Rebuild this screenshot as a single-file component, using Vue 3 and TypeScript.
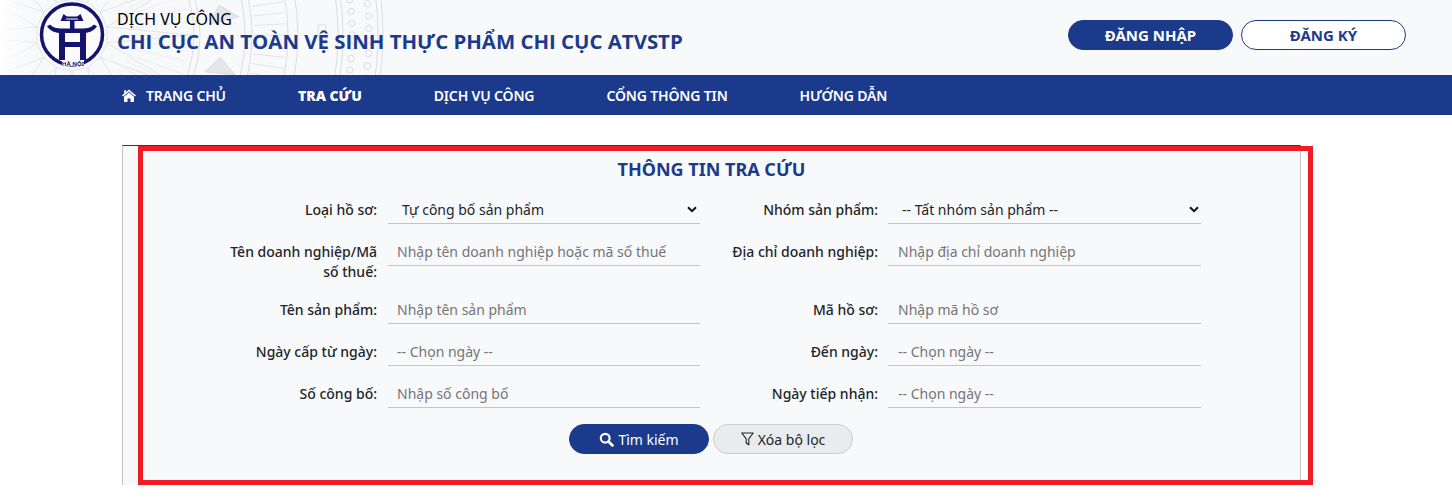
<script setup lang="ts">
const CX = 72
const CY = 35
function polar(r: number, a: number) {
  return { x: CX + Math.cos(a) * r, y: CY + Math.sin(a) * r }
}
function seg(r1: number, r2: number, a: number) {
  const p = polar(r1, a)
  const q = polar(r2, a)
  return { x1: p.x, y1: p.y, x2: q.x, y2: q.y }
}
const star = Array.from({ length: 14 }, (_, i) => {
  const a = (i * Math.PI * 2) / 14
  const w = Math.PI / 14
  const l = polar(36, a - w)
  const t = polar(118, a)
  const r = polar(36, a + w)
  return `${l.x},${l.y} ${t.x},${t.y} ${r.x},${r.y}`
})
const hatch = Array.from({ length: 56 }, (_, i) => seg(60, 118, (i * Math.PI * 2) / 56))
const bandTicks = Array.from({ length: 120 }, (_, i) => seg(182, 214, (i * Math.PI * 2) / 120))
const figures = Array.from({ length: 22 }, (_, i) => {
  const a = (i * Math.PI * 2) / 22
  const p = polar(250, a)
  return { x: p.x - 4, y: p.y - 10, h: i % 2 ? 20 : 14 }
})
const birds = Array.from({ length: 18 }, (_, i) => {
  const a = (i * Math.PI * 2) / 18 + 0.15
  const p = polar(150, a)
  const q = polar(168, a + 0.09)
  const s = polar(138, a + 0.12)
  return `${p.x},${p.y} ${q.x},${q.y} ${s.x},${s.y}`
})
const beads = Array.from({ length: 18 }, (_, i) => {
  const a = (i - 9) * 0.042
  return [polar(280, a), polar(297, a + 0.02)]
}).flat()
const rings = [122, 128, 173, 180, 216, 226, 266, 271, 306, 311]

const nav = ['TRA CỨU', 'DỊCH VỤ CÔNG', 'CỔNG THÔNG TIN', 'HƯỚNG DẪN']
const fields = [
  { label: 'Loại hồ sơ:', kind: 'select', value: 'Tự công bố sản phẩm' },
  { label: 'Nhóm sản phẩm:', kind: 'select', value: '-- Tất nhóm sản phẩm --' },
  { label: 'Tên doanh nghiệp/Mã số thuế:', kind: 'input', value: 'Nhập tên doanh nghiệp hoặc mã số thuế' },
  { label: 'Địa chỉ doanh nghiệp:', kind: 'input', value: 'Nhập địa chỉ doanh nghiệp' },
  { label: 'Tên sản phẩm:', kind: 'input', value: 'Nhập tên sản phẩm' },
  { label: 'Mã hồ sơ:', kind: 'input', value: 'Nhập mã hồ sơ' },
  { label: 'Ngày cấp từ ngày:', kind: 'input', value: '-- Chọn ngày --' },
  { label: 'Đến ngày:', kind: 'input', value: '-- Chọn ngày --' },
  { label: 'Số công bố:', kind: 'input', value: 'Nhập số công bố' },
  { label: 'Ngày tiếp nhận:', kind: 'input', value: '-- Chọn ngày --' },
]
</script>

<template>
  <div class="page">
    <header class="top">
      <svg class="pattern" width="400" height="75" viewBox="0 0 400 75" aria-hidden="true">
        <defs>
          <linearGradient id="fade" x1="0" x2="1" y1="0" y2="0">
            <stop offset="0" stop-color="#ffffff" stop-opacity="1" />
            <stop offset="1" stop-color="#f8f9fb" stop-opacity="0" />
          </linearGradient>
        </defs>
        <g fill="none" stroke="#e2e4e8" stroke-width="1">
          <line v-for="(r, i) in hatch" :key="'h' + i" v-bind="r" stroke="#eceef1" />
          <polygon v-for="(p, i) in star" :key="'s' + i" :points="p" />
          <circle v-for="r in rings" :key="r" :cx="CX" :cy="CY" :r="r" stroke="#dcdee2" />
          <line v-for="(r, i) in bandTicks" :key="'t' + i" v-bind="r" />
          <polygon v-for="(p, i) in birds" :key="'b' + i" :points="p" fill="#e4e6ea" stroke="#dadce0" />
          <rect v-for="(f, i) in figures" :key="'f' + i" :x="f.x" :y="f.y" width="8" :height="f.h" stroke="#dcdee2" />
          <circle v-for="(b, i) in beads" :key="'d' + i" :cx="b.x" :cy="b.y" r="3.200" stroke="#dcdee2" />
        </g>
        <rect x="0" y="0" width="40" height="75" fill="url(#fade)" />
      </svg>
      <svg class="logo" width="85" height="75" viewBox="0 0 85 75" aria-label="Logo Hà Nội">
        <circle cx="42" cy="34.500" r="30.500" fill="#fbfbfd" stroke="#14146e" stroke-width="3.500" />
        <g fill="#14146e">
          <path d="M30.500 21 L33.500 14 L37 16.500 L47 16.500 L50.500 14 L53.500 21 Z M35.500 19.500 H48.500 L47.500 18.500 H36.500 Z" fill-rule="evenodd" />
          <rect x="40" y="21" width="4.500" height="8" />
          <path d="M17 26.500 L20 24.500 C23 27.500 27 28.500 31 28.500 H53 C57 28.500 61 27.500 64 24.500 L67 26.500 C63 31.500 58 33 53 33 H31 C26 33 21 31.500 17 26.500 Z" />
          <rect x="29" y="32" width="6" height="28" />
          <rect x="50" y="32" width="6" height="28" />
          <rect x="34" y="42" width="17" height="5" />
        </g>
        <rect x="32" y="60" width="22" height="6" fill="#fbfbfd" />
        <text x="43" y="65.500" class="logo-text" text-anchor="middle">HÀ NỘI</text>
      </svg>
      <div class="brand">
        <div class="brand-sub">DỊCH VỤ CÔNG</div>
        <div class="brand-name">CHI CỤC AN TOÀN VỆ SINH THỰC PHẨM CHI CỤC ATVSTP</div>
      </div>
      <div class="auth">
        <a class="pill pill-solid">ĐĂNG NHẬP</a>
        <a class="pill pill-line">ĐĂNG KÝ</a>
      </div>
    </header>

    <nav class="nav">
      <a class="nav-item">
        <svg class="home" width="14" height="13" viewBox="0 0 14 13" aria-hidden="true">
          <path d="M7 0.500 L14 6.500 L12.800 7.500 L7 2.500 L1.200 7.500 L0 6.500 L2.200 4.600 V1.200 H4 V3.100 Z" fill="#fff" />
          <path d="M7 3.500 L12 7.800 V13 H8.500 V9.500 H5.500 V13 H2 V7.800 Z" fill="#fff" />
        </svg>
        TRANG CHỦ
      </a>
      <a v-for="(n, i) in nav" :key="n" class="nav-item" :class="{ active: i === 0 }">{{ n }}</a>
    </nav>

    <section class="card">
      <h2 class="title">THÔNG TIN TRA CỨU</h2>
      <div class="form">
        <div v-for="f in fields" :key="f.label" class="field">
          <label class="label">{{ f.label }}</label>
          <div v-if="f.kind === 'select'" class="control select">
            <span>{{ f.value }}</span>
            <svg width="10" height="7" viewBox="0 0 10 7" aria-hidden="true">
              <path d="M1 1.200 L5 5.200 L9 1.200" fill="none" stroke="#111" stroke-width="2" />
            </svg>
          </div>
          <div v-else class="control placeholder">{{ f.value }}</div>
        </div>
      </div>
      <div class="actions">
        <button class="btn btn-search" type="button">
          <svg width="15" height="15" viewBox="0 0 15 15" aria-hidden="true">
            <circle cx="6.200" cy="6.200" r="4.400" fill="none" stroke="#fff" stroke-width="2.200" />
            <path d="M9.500 9.500 L13.500 13.500" stroke="#fff" stroke-width="2.600" stroke-linecap="round" />
          </svg>
          Tìm kiếm
        </button>
        <button class="btn btn-clear" type="button">
          <svg width="13" height="14" viewBox="0 0 13 14" aria-hidden="true">
            <path d="M0.800 1 H12.200 L7.800 6.800 V12.800 L5.200 11 V6.800 Z" fill="none" stroke="#222" stroke-width="1.100" stroke-linejoin="round" />
          </svg>
          Xóa bộ lọc
        </button>
      </div>
    </section>

    <div class="highlight"></div>
  </div>
</template>

<style>
html, body { margin: 0; background: #fff; }
</style>

<style scoped>
.page {
  position: relative;
  width: 1452px;
  height: 499px;
  overflow: hidden;
  font-family: "Noto Sans", "Open Sans", sans-serif;
  color: #212529;
  background: #fff;
}
.top {
  position: relative;
  height: 75px;
  box-sizing: border-box;
  padding: 0 46px 0 30px;
  background: #f8f9fb;
  display: flex;
  align-items: center;
  overflow: hidden;
}
.pattern { position: absolute; left: 0; top: 0; }
.logo { position: relative; flex: none; margin-right: 2px; }
.logo-text { font: 700 6px "Noto Sans", sans-serif; fill: #14146e; }
.brand { position: relative; flex: 1; margin-top: -15px; }
.brand-sub { font-size: 16px; line-height: 22px; color: #000; }
.brand-name {
  font-family: "Open Sans", "Noto Sans", sans-serif;
  font-size: 20.400px;
  font-weight: 700;
  line-height: 22px;
  color: #1c3a8c;
}
.auth { position: relative; display: flex; gap: 8px; margin-top: -5px; }
.pill {
  box-sizing: border-box;
  width: 165px;
  height: 30px;
  border-radius: 15px;
  display: flex;
  align-items: center;
  justify-content: center;
  font-size: 15px;
  font-weight: 700;
  border: 1px solid #1c3a8c;
}
.pill-solid { background: #1c3a8c; color: #fff; }
.pill-line { background: #fff; color: #1c3a8c; }
.nav {
  height: 40px;
  background: #1c3a8c;
  display: flex;
  align-items: center;
  gap: 72px;
  padding-left: 122px;
}
.nav-item {
  display: flex;
  align-items: center;
  gap: 10px;
  font-size: 14px;
  font-weight: 600;
  letter-spacing: -0.15px;
  color: #fff;
}
.nav-item.active { font-weight: 800; font-family: "Open Sans", sans-serif; letter-spacing: 0; }
.card {
  box-sizing: border-box;
  width: 1179px;
  height: 340px;
  margin: 30px 0 0 122px;
  background: #f8f9fb;
  border-top: 1px solid #1c3a8c;
  border-left: 1px solid #c4c4c4;
  border-right: 1px solid #c4c4c4;
}
.title {
  margin: 10px 0 0;
  font-size: 18px;
  line-height: 26px;
  font-weight: 700;
  text-align: center;
  color: #1c3a8c;
}
.form {
  display: grid;
  grid-template-columns: 488px 488px;
  column-gap: 13px;
  row-gap: 14px;
  margin: 14px 0 0 89px;
}
.field { display: flex; align-items: flex-start; }
.field:nth-child(even) .label { margin-right: 10px; }
.label {
  flex: none;
  width: 165px;
  margin-right: 11px;
  padding-top: 4px;
  font-size: 14px;
  line-height: 20px;
  font-weight: 500;
  text-align: right;
  color: #212529;
}
.control {
  flex: 1;
  box-sizing: border-box;
  height: 28px;
  padding: 0 9px;
  display: flex;
  align-items: center;
  font-size: 14px;
  border-bottom: 1px solid #c4c4c4;
}
.select { justify-content: space-between; padding: 0 3px 0 14px; color: #212529; }
.field:nth-child(even) .select { padding-right: 2px; }
.placeholder { color: #757575; }
.field:nth-child(even) .placeholder { padding-left: 10px; }
.actions { display: flex; justify-content: center; gap: 4px; margin-top: 16px; padding-right: 1px; }
.btn {
  box-sizing: border-box;
  width: 140px;
  height: 30px;
  border-radius: 15px;
  display: flex;
  align-items: center;
  justify-content: center;
  gap: 4px;
  font-family: inherit;
  font-size: 14px;
  padding: 0;
  cursor: pointer;
}
.btn-search { background: #1c3a8c; color: #fff; border: 1px solid #1c3a8c; }
.btn-clear { background: #e9ecef; color: #212529; border: 1px solid #ccc; }
.highlight {
  position: absolute;
  left: 138px;
  top: 146px;
  width: 1175px;
  height: 339px;
  box-sizing: border-box;
  border: 5px solid #ee1c25;
  pointer-events: none;
}
</style>
